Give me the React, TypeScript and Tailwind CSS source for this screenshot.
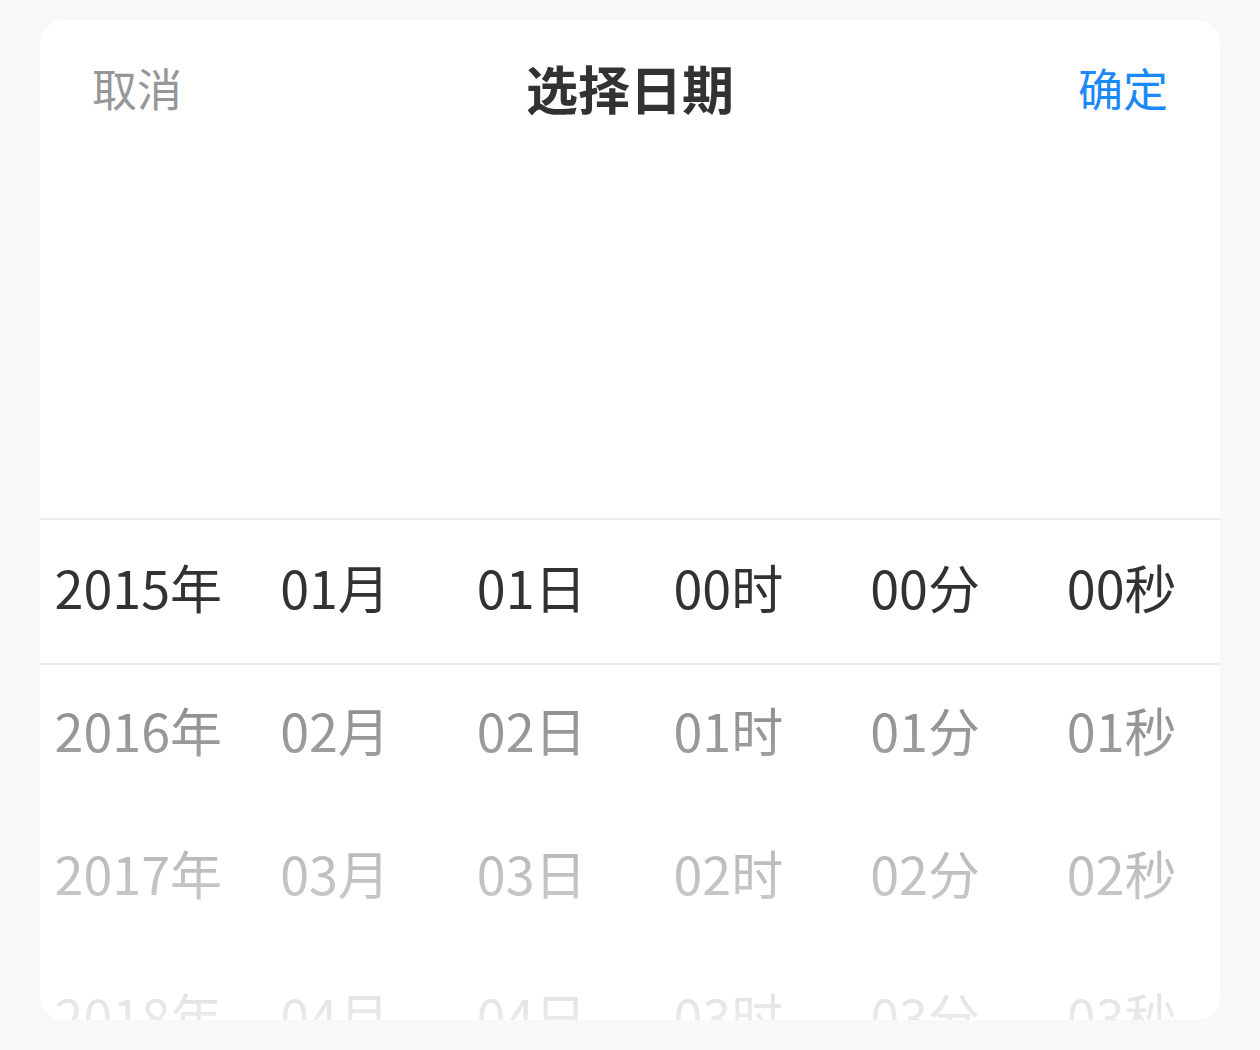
import React from 'react';

const columns = [
  { unit: '年', values: ['2015', '2016', '2017', '2018'] },
  { unit: '月', values: ['01', '02', '03', '04'] },
  { unit: '日', values: ['01', '02', '03', '04'] },
  { unit: '时', values: ['00', '01', '02', '03'] },
  { unit: '分', values: ['00', '01', '02', '03'] },
  { unit: '秒', values: ['00', '01', '02', '03'] },
];

const font = { fontFamily: '"Noto Sans CJK SC", "Noto Sans", sans-serif' };

export default function App() {
  return (
    <div className="min-h-screen bg-[#f7f8fa] px-[40px] pt-[20px]" style={font}>
      <div className="h-[1000px] overflow-hidden rounded-[24px] bg-white">
        {/* toolbar */}
        <div className="flex h-[143px] items-center justify-between px-[52px] pb-[8px]">
          <button className="text-[45px] leading-none text-[#969799]">取消</button>
          <div className="text-[52px] font-semibold leading-none text-[#323233]">选择日期</div>
          <button className="text-[45px] leading-none text-[#1989fa]">确定</button>
        </div>

        {/* picker */}
        <div className="relative h-[857px] overflow-hidden">
          <div className="flex pt-[357px]">
            {columns.map((col) => (
              <div key={col.unit} className="flex flex-1 flex-col">
                {col.values.map((v) => (
                  <div
                    key={v}
                    className="flex h-[143px] items-center justify-center pb-[10px] text-[52px] leading-none text-[#323233]"
                  >
                    {v}
                    {col.unit}
                  </div>
                ))}
              </div>
            ))}
          </div>

          {/* mask */}
          <div className="pointer-events-none absolute inset-x-0 bottom-0 h-[355px] bg-gradient-to-t from-white/90 to-white/40" />

          {/* frame */}
          <div className="pointer-events-none absolute inset-x-0 top-[355px] h-[147px] border-y-2 border-[#ebedf0]" />
        </div>
      </div>
    </div>
  );
}
